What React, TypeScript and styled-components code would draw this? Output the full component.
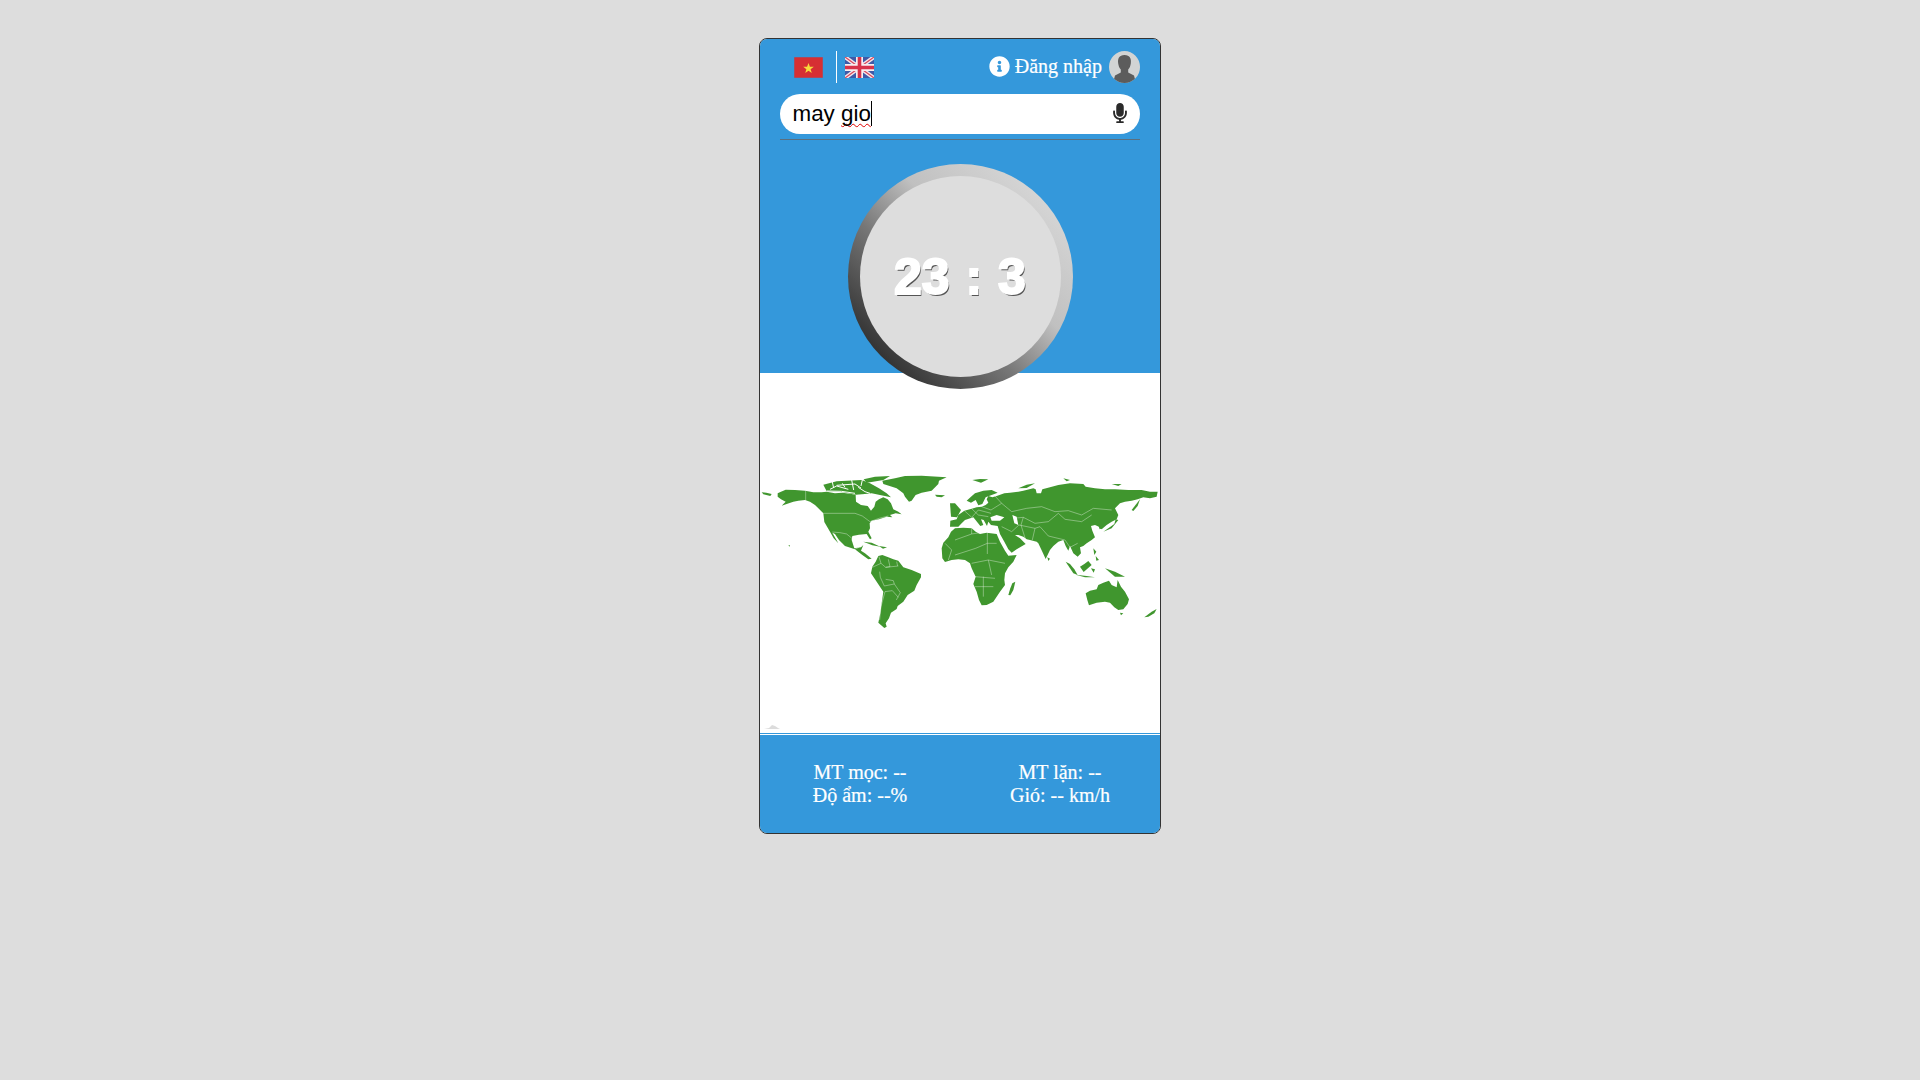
import React from 'react';
import styled, { createGlobalStyle } from 'styled-components';
import { FaInfoCircle, FaMicrophone } from 'react-icons/fa';

const GlobalStyle = createGlobalStyle`
  html, body {
    margin: 0;
    padding: 0;
    background: #dddddd;
    font-family: "Liberation Serif", serif;
  }
`;

const Page = styled.div`
  display: flex;
  justify-content: center;
  padding-top: 38px;
  min-height: 1042px;
  box-sizing: border-box;
`;

const Card = styled.div`
  width: 400px;
  height: 794px;
  border: 1px solid #333;
  border-radius: 8px;
  display: flex;
  flex-direction: column;
`;

const TopPanel = styled.div`
  height: 334px;
  flex-shrink: 0;
  background: #3498db;
  border-radius: 7px 7px 0 0;
  padding: 12px 20px 0;
  box-sizing: border-box;
`;

const HeaderRow = styled.div`
  display: flex;
  align-items: center;
  height: 32px;
`;

const LangGroup = styled.div`
  display: flex;
  align-items: center;
  padding-left: 14px;
`;

const Flag = styled.svg`
  display: block;
  width: 29px;
  height: 21px;
`;

const Divider = styled.span`
  width: 1px;
  height: 32px;
  background: #fff;
  margin: 0 8px 0 13px;
`;

const LoginGroup = styled.div`
  margin-left: auto;
  display: flex;
  align-items: center;
  color: #fff;
  font-size: 20px;
  line-height: 30px;
`;

const LoginText = styled.span`
  margin-top: -2px;
  -webkit-text-stroke: 0.2px #fff;
`;

const InfoIcon = styled(FaInfoCircle)`
  width: 21px;
  height: 21px;
  margin-right: 5px;
  margin-top: -1px;
  color: #fff;
`;

const Avatar = styled.svg`
  width: 31px;
  height: 32px;
  margin-left: 7px;
  display: block;
`;

const SearchBox = styled.div`
  margin-top: 11px;
  height: 40px;
  border-radius: 20px;
  background: #fff;
  display: flex;
  align-items: center;
  padding: 0 13px 0 12.5px;
  font-family: "Liberation Sans", sans-serif;
  font-size: 22.4px;
  color: #000;
`;

const SearchText = styled.span`
  white-space: pre;
  margin-top: -1px;
`;

const SpellError = styled.span`
  text-decoration: underline wavy #e00000 1px;
  text-decoration-skip-ink: none;
  text-underline-offset: 2px;
`;

const Caret = styled.span`
  width: 1px;
  height: 25px;
  background: #000;
  margin-top: -1px;
`;

const MicIcon = styled(FaMicrophone)`
  margin-left: auto;
  width: 14px;
  height: 20px;
  margin-top: -2px;
  color: #2a2a2a;
`;

const Rule = styled.div`
  margin-top: 5px;
  height: 1px;
  background: #5b6f7e;
`;

const ClockRow = styled.div`
  display: flex;
  justify-content: center;
  margin-top: 24px;
`;

const ClockRing = styled.div`
  width: 225px;
  height: 225px;
  flex-shrink: 0;
  box-sizing: border-box;
  padding: 12px;
  border-radius: 50%;
  background: linear-gradient(45deg, #222 8%, #777 40%, #c0c0c0 60%, #d8d8d8 90%);
  position: relative;
  z-index: 1;
`;

const ClockFace = styled.div`
  width: 100%;
  height: 100%;
  border-radius: 50%;
  background: #dddddd;
  display: flex;
  align-items: center;
  justify-content: center;
  font-family: "Liberation Sans", sans-serif;
  font-weight: 700;
  font-size: 50px;
  word-spacing: 2px;
  color: #fff;
  -webkit-text-stroke: 2px #fff;
  text-shadow: 1.5px 1.5px 0 #555;
  white-space: pre;
`;

const MapPanel = styled.div`
  height: 361px;
  flex-shrink: 0;
  box-sizing: border-box;
  background: #fff;
  border-bottom: 1px solid #3498db;
`;

const MapSvg = styled.svg`
  display: block;
  width: 400px;
  height: 360px;
`;

const Footer = styled.div`
  flex: 1;
  background: #3498db;
  border-top: 1px solid #fff;
  border-radius: 0 0 7px 7px;
  padding-bottom: 1px;
  display: grid;
  grid-template-columns: 1fr 1fr;
  align-items: center;
  color: #fff;
  font-size: 20px;
  line-height: 23px;
  text-align: center;
  -webkit-text-stroke: 0.2px #fff;
`;

const Line = styled.div``;

const LAND = '#40962e';
const BORDER = 'rgba(255,255,255,0.55)';

const americas = [
  'M68,100 L78,95 L92,89 L120,90 L150,92 L175,97 L200,97 L215,95 L240,100 L262,98 L290,102 L302,105 L303,125 L318,135 L338,138 L348,152 L358,140 L362,125 L372,118 L385,112 L398,118 L408,130 L415,148 L430,155 L440,163 L422,160 L405,165 L412,172 L395,170 L372,178 L350,182 L344,190 L345,205 L340,215 L350,235 L345,238 L335,222 L312,224 L292,228 L290,240 L298,265 L318,262 L325,255 L318,272 L330,280 L350,296 L340,298 L322,285 L300,268 L270,258 L252,240 L240,222 L232,218 L250,250 L236,235 L222,210 L208,186 L205,160 L190,145 L180,135 L165,125 L150,120 L130,122 L115,125 L95,132 L80,137 L92,125 L78,118 L68,110 Z',
  'M20,97 L34,98 L50,102 L46,108 L25,103 Z',
  'M382,62 L420,55 L450,48 L500,47 L575,52 L552,62 L550,72 L530,92 L500,98 L482,105 L470,122 L462,125 L450,110 L445,100 L425,85 L385,72 Z',
  'M326,58 L360,50 L405,48 L385,60 L350,66 L335,68 Z',
  'M205,74 L245,64 L320,60 L345,70 L372,85 L395,100 L408,112 L375,105 L350,100 L330,102 L303,104 L262,96 L215,94 Z',
  'M540,104 L570,106 L560,112 L545,110 Z',
  'M325,245 L350,248 L376,260 L352,256 Z',
  'M372,258 L396,262 L384,266 Z',
  'M100,256 L105,256 L104,260 Z',
  'M370,288 L382,285 L400,292 L415,298 L430,302 L445,322 L470,330 L498,342 L498,352 L485,375 L478,392 L458,405 L445,425 L428,438 L425,447 L408,458 L402,475 L392,490 L395,500 L388,504 L370,488 L376,460 L380,430 L385,395 L365,365 L348,340 L352,320 L362,305 Z',
];

const arcticChannels = [
  'M225,88 L245,78 L280,88',
  'M245,76 L300,72 L318,84',
  'M290,60 L296,90',
  'M310,82 L330,95 L345,100',
  'M262,70 L270,82',
  'M232,66 L236,84',
  'M215,93 L260,94 L300,100',
  'M322,60 L318,78',
];

const americasBorders = [
  'M152,92 L152,125',
  'M205,160 L300,160 L322,168 L345,185 L372,175 L400,168',
  'M232,216 L255,218 L275,222 L292,236',
  'M300,268 L312,262',
  'M372,290 L378,310 L352,322',
  'M378,310 L392,322 L430,318',
  'M374,335 L376,352 L388,378 L418,372 L436,398 L424,420',
  'M392,358 L415,362 L418,372',
  'M390,395 L378,440 L374,480',
  'M390,395 L412,392 L430,412',
  'M400,298 L405,320 L392,322',
  'M425,305 L428,318',
];

const eastern = [
  'M-40,265 L-35,248 L-20,232 L-12,215 L0,205 L25,203 L50,205 L62,215 L75,222 L95,218 L125,222 L135,245 L150,272 L160,287 L185,285 L175,305 L160,322 L150,340 L148,360 L150,375 L135,395 L115,425 L95,435 L80,436 L72,420 L65,395 L55,372 L62,350 L50,325 L45,310 L30,300 L10,298 L-10,300 L-30,306 L-38,295 Z',
  'M-15,200 L-14,182 L5,178 L10,165 L28,152 L50,146 L65,142 L80,140 L92,135 L100,128 L95,118 L100,108 L112,112 L125,108 L148,100 L165,98 L190,95 L205,92 L235,85 L242,88 L245,100 L258,100 L262,88 L285,82 L310,75 L345,70 L385,72 L392,80 L420,85 L450,88 L480,88 L520,90 L560,90 L585,95 L608,95 L605,110 L585,115 L565,112 L548,118 L530,122 L510,125 L495,130 L480,145 L490,165 L485,178 L470,185 L455,195 L440,208 L432,200 L420,195 L408,198 L412,212 L420,232 L410,240 L395,250 L385,258 L375,262 L378,280 L368,290 L355,280 L345,258 L340,272 L332,258 L325,240 L310,245 L295,258 L285,270 L272,297 L262,275 L250,250 L245,245 L225,240 L215,238 L205,230 L190,225 L180,225 L195,235 L212,252 L185,268 L170,278 L160,268 L148,245 L135,222 L130,205 L128,198 L108,195 L100,185 L96,198 L86,180 L78,178 L85,195 L76,198 L55,172 L30,180 L20,190 L10,200 Z',
  'M35,122 L48,110 L60,100 L85,92 L110,90 L128,98 L110,105 L92,112 L82,132 L70,136 L62,120 L48,128 Z',
  'M-15,130 L0,130 L18,150 L6,172 L-12,170 Z',
  'M52,60 L75,57 L100,58 L78,68 Z',
  'M190,85 L215,74 L240,70 L215,84 Z',
  'M325,55 L345,60 L335,64 Z',
  'M470,72 L500,72 L490,78 Z',
  'M160,405 L166,385 L172,370 L181,365 L175,390 L166,406 Z',
  'M392,400 L405,392 L425,388 L430,375 L445,368 L462,362 L470,375 L485,382 L488,360 L498,380 L510,395 L522,418 L518,432 L505,448 L490,450 L478,442 L465,428 L450,425 L425,428 L402,436 L397,420 Z',
  'M495,458 L505,460 L498,466 Z',
  'M568,472 L590,455 L605,447 L598,460 L580,470 Z',
  'M332,305 L345,312 L358,328 L368,345 L355,340 Z',
  'M375,320 L388,312 L400,303 L410,315 L386,336 Z',
  'M362,344 L395,348 L420,352 L390,352 Z',
  'M408,325 L420,328 L416,338 Z',
  'M450,325 L480,335 L510,350 L480,350 Z',
  'M415,265 L424,275 L418,285 Z',
  'M422,288 L432,300 L424,302 Z',
  'M445,215 L478,192 L482,178 L490,180 L470,205 Z',
  'M530,150 L555,118 L548,138 L535,153 Z',
  'M430,195 L442,205 L434,208 Z',
  'M277,292 L285,296 L280,303 Z',
];

const easternBorders = [
  'M170,155 L215,145 L260,140 L300,155 L340,152 L380,165 L415,145 L470,150',
  'M310,160 L330,178 L380,185 L410,165',
  'M175,175 L205,172 L240,190 L280,185 L310,160',
  'M192,195 L240,205 L255,200 L280,228 L330,240',
  'M240,205 L232,240',
  'M205,172 L198,195 L212,240',
  'M330,240 L345,262 L368,250',
  'M140,200 L170,215 L192,195',
  'M50,205 L50,222 L0,240',
  'M50,222 L97,215 L97,282',
  'M125,250 L97,250 L62,265 L0,285',
  'M50,310 L100,300 L150,310',
  'M60,350 L120,355',
  'M85,350 L85,410',
  'M115,380 L60,380',
  'M100,300 L110,345',
  'M120,108 L140,130 L170,155',
  'M28,152 L50,172 L70,150 L108,160',
  'M50,146 L70,165 L100,170',
  'M80,140 L108,150 L140,130',
  'M-30,250 L-10,270 L-20,300',
];

const App: React.FC = () => (
  <>
    <GlobalStyle />
    <Page>
      <Card>
        <TopPanel>
          <HeaderRow>
            <LangGroup>
              <Flag viewBox="0 0 29 21">
                <rect width="29" height="21" fill="#d62f33" stroke="#6f6f9c" strokeWidth="0.8" />
                <polygon points="14.5,6 15.9,9.8 19.8,9.8 16.6,12.2 17.8,16 14.5,13.7 11.2,16 12.4,12.2 9.2,9.8 13.1,9.8" fill="#f7dc3c" />
              </Flag>
              <Divider />
              <Flag viewBox="0 0 29 21">
                <rect width="29" height="21" fill="#3f5aa8" />
                <path d="M0,0 L29,21 M29,0 L0,21" stroke="#f3e6ea" strokeWidth="4" />
                <path d="M0,0 L29,21 M29,0 L0,21" stroke="#d9455a" strokeWidth="1.2" />
                <path d="M14.5,0 V21 M0,10.5 H29" stroke="#f7eef0" strokeWidth="7" />
                <path d="M14.5,0 V21 M0,10.5 H29" stroke="#d8324a" strokeWidth="3.6" />
              </Flag>
            </LangGroup>
            <LoginGroup>
              <InfoIcon />
              <LoginText>Đăng nhập</LoginText>
              <Avatar viewBox="0 0 31 32">
                <defs>
                  <clipPath id="avatarClip">
                    <ellipse cx="15.5" cy="16" rx="15.5" ry="16" />
                  </clipPath>
                </defs>
                <ellipse cx="15.5" cy="16" rx="15.5" ry="16" fill="#d2d4d4" />
                <g clipPath="url(#avatarClip)" fill="#5c5c5c">
                  <path d="M15.5,4 C10,4 8.5,8 9.2,12.5 C9.6,15 10.3,17 11.8,18.5 L11.8,21.5 L6,24.5 L4,32 L27,32 L25,24.5 L19.2,21.5 L19.2,18.5 C20.7,17 21.4,15 21.8,12.5 C22.5,8 21,4 15.5,4 Z" />
                </g>
              </Avatar>
            </LoginGroup>
          </HeaderRow>
          <SearchBox>
            <SearchText>
              {'may '}
              <SpellError>gio</SpellError>
            </SearchText>
            <Caret />
            <MicIcon />
          </SearchBox>
          <Rule />
          <ClockRow>
            <ClockRing>
              <ClockFace>23 : 3</ClockFace>
            </ClockRing>
          </ClockRow>
        </TopPanel>
        <MapPanel>
          <MapSvg viewBox="760 373 400 360">
            <g transform="translate(755 460) scale(0.3333)">
              {americas.map((d) => (
                <path key={d} d={d} fill={LAND} />
              ))}
              {arcticChannels.map((d) => (
                <path key={d} d={d} fill="none" stroke="#fff" strokeWidth="3" />
              ))}
              {americasBorders.map((d) => (
                <path key={d} d={d} fill="none" stroke={BORDER} strokeWidth="2" />
              ))}
            </g>
            <g transform="translate(955 460) scale(0.3333)">
              {eastern.map((d) => (
                <path key={d} d={d} fill={LAND} />
              ))}
              <path d="M106,172 L125,165 L148,172 L135,182 L110,182 Z M172,165 L185,170 L190,195 L178,190 Z" fill="#fff" />
              {easternBorders.map((d) => (
                <path key={d} d={d} fill="none" stroke={BORDER} strokeWidth="2" />
              ))}
            </g>
            <path d="M764,729 L769,728 L772,725 L775,726 L778,728 L780,729 Z" fill="#dcdcdc" />
          </MapSvg>
        </MapPanel>
        <Footer>
          <div>
            <Line>MT mọc: --</Line>
            <Line>Độ ẩm: --%</Line>
          </div>
          <div>
            <Line>MT lặn: --</Line>
            <Line>Gió: -- km/h</Line>
          </div>
        </Footer>
      </Card>
    </Page>
  </>
);

export default App;
